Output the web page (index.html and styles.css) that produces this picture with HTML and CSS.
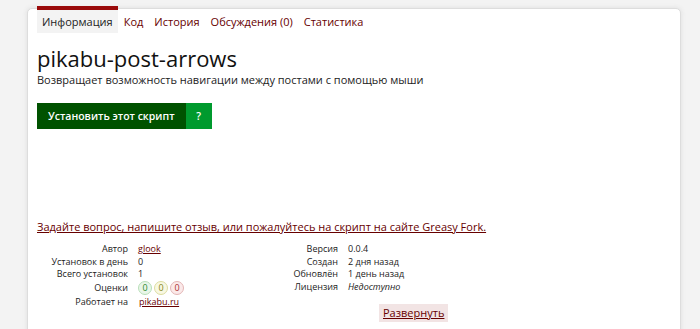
FILE: index.html
```html
<!DOCTYPE html>
<html lang="ru">
<head>
  <meta charset="UTF-8">
  <title>pikabu-post-arrows</title>
  <link rel="stylesheet" href="styles.css">
</head>
<body>
  <div id="script-info">
    <ul id="script-links">
      <li class="current">Информация</li>
      <li><a href="#">Код</a></li>
      <li><a href="#">История</a></li>
      <li><a href="#">Обсуждения (0)</a></li>
      <li><a href="#">Статистика</a></li>
    </ul>

    <h2>pikabu-post-arrows</h2>
    <p id="script-description">Возвращает возможность навигации между постами с помощью мыши</p>

    <div id="install-area">
      <a class="install-link" href="#">Установить этот скрипт</a>
      <a class="install-help-link" href="#">?</a>
    </div>

    <p id="feedback"><a href="#">Задайте вопрос, напишите отзыв, или пожалуйтесь на скрипт на сайте Greasy Fork.</a></p>

    <div id="script-meta">
      <div class="meta-col">
        <dl>
          <dt>Автор</dt><dd><a href="#">glook</a></dd>
          <dt>Установок в день</dt><dd>0</dd>
          <dt>Всего установок</dt><dd>1</dd>
          <dt class="tall">Оценки</dt>
          <dd class="tall">
            <span class="rating good">0</span>
            <span class="rating ok">0</span>
            <span class="rating bad">0</span>
          </dd>
          <dt class="applies">Работает на</dt><dd class="applies"><a href="#">pikabu.ru</a></dd>
        </dl>
      </div>
      <div class="meta-col">
        <dl>
          <dt>Версия</dt><dd>0.0.4</dd>
          <dt>Создан</dt><dd>2 дня назад</dd>
          <dt>Обновлён</dt><dd>1 день назад</dd>
          <dt>Лицензия</dt><dd><i>Недоступно</i></dd>
        </dl>
        <a class="expand" href="#">Развернуть</a>
      </div>
    </div>
  </div>
</body>
</html>
```

FILE: styles.css
```css
body {
  font-family: "Open Sans", "Liberation Sans", sans-serif;
  margin: 0;
  padding: 8px 0 0 27px;
  background-color: #f3f3f3;
  color: #222;
  overflow: hidden;
}
a {
  color: #670000;
}
#script-info {
  width: 634px;
  height: 400px;
  background-color: #fff;
  border: 1px solid #ddd;
  border-radius: 5px 5px 0 0;
  box-shadow: 0 0 5px #ddd;
  padding: 0 9px;
}
#script-links {
  list-style: none;
  margin: -3px 0 0;
  padding: 0;
  display: flex;
  gap: 1px;
  font-size: 11px;
  line-height: 23px;
}
#script-links li {
  padding: 0 5px;
  border-top: 4px solid transparent;
}
#script-links li.current {
  background-color: #f3f3f3;
  border-top-color: #9a0a0a;
}
#script-links a {
  text-decoration: none;
}
h2 {
  font-size: 22px;
  font-weight: normal;
  line-height: 26px;
  margin: 12px 0 0;
  color: #111;
}
#script-description {
  font-size: 11px;
  line-height: 17px;
  margin: 0;
}
#install-area {
  display: flex;
  margin-top: 15px;
  height: 26px;
  font-size: 10.5px;
  font-weight: 600;
  line-height: 26px;
}
#install-area a {
  color: #fff;
  text-decoration: none;
}
.install-link {
  background-color: #005200;
  padding: 0 11px;
}
.install-help-link {
  background-color: #009a2e;
  width: 26px;
  text-align: center;
}
#feedback {
  font-size: 11px;
  line-height: 18px;
  margin: 89px 0 0;
}
#script-meta {
  display: flex;
  margin-top: 7px;
  font-size: 9px;
}
.meta-col {
  width: 210px;
}
dl {
  display: grid;
  grid-template-columns: 91px auto;
  column-gap: 10px;
  margin: 0;
  line-height: 12.5px;
}
dt {
  text-align: right;
}
dd {
  margin: 0;
}
dt.tall, dd.tall {
  line-height: 14px;
}
dd.tall {
  display: flex;
  gap: 2px;
}
dt.applies, dd.applies {
  line-height: 14px;
}
dd.applies {
  padding-left: 1px;
}
.rating {
  display: inline-block;
  width: 14px;
  height: 14px;
  border-radius: 50%;
  text-align: center;
  font-size: 9px;
  line-height: 12px;
  box-sizing: border-box;
}
.good {
  color: #2e8b2e;
  background-color: #e9f6e9;
  border: 1px solid #b8dfb8;
}
.ok {
  color: #85851a;
  background-color: #f8f8e2;
  border: 1px solid #dcdca0;
}
.bad {
  color: #a33;
  background-color: #fbe9e9;
  border: 1px solid #e3b5b5;
}
.expand {
  display: inline-block;
  margin: 11px 0 0 132px;
  padding: 0 4px;
  font-size: 11px;
  line-height: 18px;
  background-color: #f2e4e4;
}
```
